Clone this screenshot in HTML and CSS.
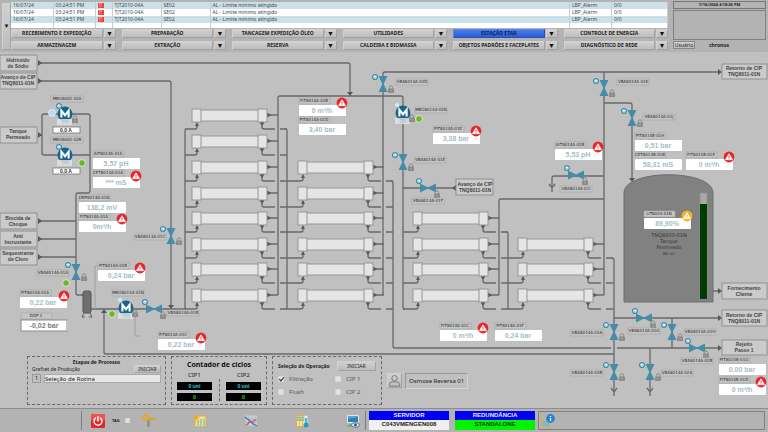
FILE: index.html
```html
<!DOCTYPE html>
<html lang="pt-BR">
<head>
<meta charset="utf-8">
<meta name="viewport" content="width=device-width, initial-scale=1">
<title>Estação ETAR - Osmose Reversa 01</title>
<link rel="stylesheet" href="styles.css">
</head>
<body>
<header class="top">
  <button class="expand" type="button" aria-label="Expandir alarmes">▼</button>
  <div class="center">
    <table class="alarms">
      <colgroup><col class="c-date"><col class="c-date"><col class="c-icon"><col class="c-tag"><col class="c-tag"><col><col class="c-date"><col class="c-last"></colgroup>
      <tbody>
      <tr><td>16/07/24</td><td>03:24:51 PM</td><td><span class="flag">!!</span></td><td>TJT2010-04A</td><td>SE02</td><td>AL - Limite mínimo atingido</td><td>LBP_Alarm</td><td>0/0</td></tr>
      <tr><td>16/07/24</td><td>03:24:51 PM</td><td><span class="flag">!!</span></td><td>TJT2010-04A</td><td>SE02</td><td>AL - Limite mínimo atingido</td><td>LBP_Alarm</td><td>0/0</td></tr>
      <tr><td>16/07/24</td><td>03:24:51 PM</td><td><span class="flag">!!</span></td><td>TJT2010-04A</td><td>SE02</td><td>AL - Limite mínimo atingido</td><td>LBP_Alarm</td><td>0/0</td></tr>
      <tr class="blank"><td></td><td></td><td></td><td></td><td></td><td></td><td></td><td></td></tr>
      </tbody>
    </table>
    <nav class="menu">
      <div class="item"><button type="button">RECEBIMENTO E EXPEDIÇÃO</button><button type="button" class="drop" aria-label="Abrir">▼</button></div>
      <div class="item"><button type="button">PREPARAÇÃO</button><button type="button" class="drop" aria-label="Abrir">▼</button></div>
      <div class="item"><button type="button">TANCAGEM EXPEDIÇÃO ÓLEO</button><button type="button" class="drop" aria-label="Abrir">▼</button></div>
      <div class="item"><button type="button">UTILIDADES</button><button type="button" class="drop" aria-label="Abrir">▼</button></div>
      <div class="item"><button type="button" class="active">ESTAÇÃO ETAR</button><button type="button" class="drop" aria-label="Abrir">▼</button></div>
      <div class="item"><button type="button">CONTROLE DE ENERGIA</button><button type="button" class="drop" aria-label="Abrir">▼</button></div>
      <div class="item"><button type="button">ARMAZENAGEM</button><button type="button" class="drop" aria-label="Abrir">▼</button></div>
      <div class="item"><button type="button">EXTRAÇÃO</button><button type="button" class="drop" aria-label="Abrir">▼</button></div>
      <div class="item"><button type="button">RESERVA</button><button type="button" class="drop" aria-label="Abrir">▼</button></div>
      <div class="item"><button type="button">CALDEIRA E BIOMASSA</button><button type="button" class="drop" aria-label="Abrir">▼</button></div>
      <div class="item"><button type="button">OBJETOS PADRÕES E FACEPLATES</button><button type="button" class="drop" aria-label="Abrir">▼</button></div>
      <div class="item"><button type="button">DIAGNÓSTICO DE REDE</button><button type="button" class="drop" aria-label="Abrir">▼</button></div>
    </nav>
  </div>
  <aside class="session">
    <div class="clock">7/16/2024 4:18:26 PM</div>
    <div class="screenbox"></div>
    <div class="user"><button type="button">Usuário</button><strong>chronus</strong></div>
  </aside>
</header>

<main class="plant">
<svg class="diagram" viewBox="0 52 768 356" role="img" aria-label="Diagrama da osmose reversa">
  <defs>
    <g id="membrane">
      <path class="pipe" d="M-7 14H3q2 0 2-2V8M75 0H86M70 7V12q0 2 2 2H83M88 14H95"/>
      <path class="arrow" d="M5 7l2 4h-4zM75-2h1l3 2-3 2h-1zM68 7h4v1l-2 3-2-3z"/>
      <rect class="shell" x="8" y="-5" width="59" height="11"/>
      <rect class="cap" x="0" y="-6" width="9" height="13"/>
      <rect class="cap" x="66" y="-6" width="9" height="13"/>
    </g>
    <g id="lock">
      <path d="M-1.700 0v-1.500a1.700 1.700 0 0 1 3.400 0V0" fill="none" stroke="#8c8c8c" stroke-width="1"/>
      <rect x="-3" y="-0.500" width="6" height="4.500" rx=".5" fill="#8c8c8c"/>
      <path d="M0 1v1.500" stroke="#b5b5b5" stroke-width=".8"/>
    </g>
    <g id="ring"><circle r="2.400" fill="#e8f2f6" stroke="#3f8cab" stroke-width="1.300"/><path d="M-1 1.500q1-2 2 0" fill="none" stroke="#3f8cab" stroke-width=".7"/></g>
    <g id="vv">
      <path d="M-4.500-8H4.500L.6 0 4.500 8H-4.500L-.6 0z" fill="#458ca9"/>
      <use href="#ring" x="-8" y="-7"/><use href="#lock" x="8" y="5"/>
    </g>
    <g id="hv">
      <path d="M-8-4.500V4.500L0 .6 8 4.500V-4.500L0-.6z" fill="#458ca9"/>
      <use href="#ring" x="-9" y="-7"/><use href="#lock" x="9" y="6"/>
    </g>
    <g id="motorbody">
      <circle r="7.500" fill="#17658b"/>
      <path d="M-3.600 3.600V-3.300L0 1.200 3.600-3.300V3.600" fill="none" stroke="#fff" stroke-width="2.100"/>
      <rect x="-8" y="5" width="15" height="6" fill="#dfe3e5" fill-opacity=".85"/>
    </g>
    <g id="motor"><use href="#ring" x="-6" y="-8"/><use href="#motorbody"/></g>
    <g id="motorpale"><circle cx="-6" cy="-8" r="2.600" fill="#dbe6ea" stroke="#a9c6d3"/><use href="#motorbody"/></g>
    <g id="alarm">
      <circle r="5.400" fill="#e5262b"/>
      <path d="M0-3.300L3.600 2.700H-3.600z" fill="#fff" stroke="#fff" stroke-width=".6" stroke-linejoin="round"/>
      <path d="M0-1.400V.9M0 1.500v.8" stroke="#e5262b" stroke-width=".9"/>
    </g>
    <g id="warn">
      <circle r="5.400" fill="#fbb324"/>
      <path d="M0-3.300L3.600 2.700H-3.600z" fill="#fff" stroke="#fff" stroke-width=".6" stroke-linejoin="round"/>
      <path d="M0-1.400V.9M0 1.500v.8" stroke="#fbb324" stroke-width=".9"/>
    </g>
    <g id="on"><circle r="3.400" fill="#6cb52d" stroke="#e2eedb" stroke-width=".9"/></g>
    <g id="fork"><path class="pipe" d="M-3-5L0-1 3-5M0-1V3"/></g>
    <rect id="tag" class="tagbox" width="32" height="6"/>
    <g id="meter"><rect class="tagbox" width="31" height="6"/><rect class="valbox" y="7" width="47" height="11" rx="1"/></g>
    <rect id="port" class="portbox" width="37" height="16"/>
    <path id="right" class="arrow" d="M-4-3L0 0-4 3z"/>
    <path id="down" class="arrow" d="M-3-4h6L0 0z"/>
  </defs>

  <g class="pipe">
    <path d="M40 63H348q2 0 2 2V93M40 81H169q2 0 2 2V306"/>
    <path d="M40 135H42M58 114H44q-2 0-2 2V153q0 2 2 2H90M70 114H88q2 0 2 2V191q0 2-2 2H78q-2 0-2 2V293q0 2 2 2H83"/>
    <path d="M40 221H76M40 239H76M40 257H76M91 309H186"/>
    <path d="M186 129q-1 0-1 2V309M104 312V352q0 2 2 2H614"/>
    <path d="M278 295V98q0-2 2-2H401q2 0 2 2V307q0 2 2 2M287 309V131q0-2-2-2"/>
    <path d="M287 181H291M287 207H291M287 232H291M287 258H291M287 283H291M287 309H291"/>
    <path d="M383 295V74q0-2 2-2H720M391 181q2 0 2 2V346q0 2 2 2H611M617 348H720"/>
    <path d="M403 188H456M403 232H406M403 258H406M403 283H406M403 309H406"/>
    <path d="M499 295V201q0-2 2-2H604M506 232q2 0 2 2V309M508 258H511M508 283H511M508 309H511"/>
    <path d="M604 72V295M604 176H554q-2 0-2 2V186M604 103H630q2 0 2 2V179"/>
    <path d="M611 258q3 0 3 2V392M614 318H720M672 318V348M650 348V392M713 291H720"/>
  </g>
  <path class="signal" d="M98 266H95V309M135 311V336H140"/>

  <use href="#membrane" x="192" y="115"/><use href="#membrane" x="192" y="141"/><use href="#membrane" x="192" y="167"/><use href="#membrane" x="192" y="193"/>
  <use href="#membrane" x="192" y="218"/><use href="#membrane" x="192" y="244"/><use href="#membrane" x="192" y="269"/><use href="#membrane" x="192" y="295"/>
  <use href="#membrane" x="298" y="167"/><use href="#membrane" x="298" y="193"/><use href="#membrane" x="298" y="218"/><use href="#membrane" x="298" y="244"/><use href="#membrane" x="298" y="269"/><use href="#membrane" x="298" y="295"/>
  <use href="#membrane" x="413" y="218"/><use href="#membrane" x="413" y="244"/><use href="#membrane" x="413" y="269"/><use href="#membrane" x="413" y="295"/>
  <use href="#membrane" x="518" y="244"/><use href="#membrane" x="518" y="269"/><use href="#membrane" x="518" y="295"/>

  <path d="M84 313l-2 4h3M90 313l2 4h-3" fill="none" stroke="#5c5c5c" stroke-width="1"/>
  <rect x="83" y="291" width="8" height="22" rx="2" fill="#6f6f6f" stroke="#555" stroke-width="1"/>

  <path d="M624 302V192C626 169 711 169 713 192V302z" fill="#818181" stroke="#6e6e6e" stroke-width="1"/>
  <rect x="700" y="193" width="7" height="106" fill="#a9a9a9" stroke="#8f8f8f" stroke-width="1"/>
  <rect x="700" y="204" width="7" height="95" fill="#023a03"/>
  <g class="tanktext"><text x="669" y="237">TNQ8003-01N</text><text x="669" y="243">Tanque</text><text x="669" y="249">Permeado</text><text class="small" x="669" y="255">80 m³</text></g>

  <g>
    <use href="#right" x="42" y="63"/><use href="#right" x="42" y="81"/><use href="#right" x="42" y="135"/>
    <use href="#right" x="42" y="221"/><use href="#right" x="42" y="239"/><use href="#right" x="42" y="257"/>
    <use href="#right" x="722" y="72"/><use href="#right" x="722" y="291"/><use href="#right" x="722" y="318"/><use href="#right" x="722" y="348"/>
    <use href="#down" x="350" y="96"/><use href="#down" x="171" y="309"/><use href="#down" x="632" y="182"/>
    <path class="arrow" d="M104 309l3 4h-6zM452 188l4-3v6z"/>
    <use href="#fork" x="552" y="189"/><use href="#fork" x="614" y="393"/><use href="#fork" x="650" y="393"/>
  </g>

  <g class="port">
    <use href="#port" x="0" y="55"/><text x="18" y="62">Hidróxido</text><text x="18" y="68">de Sódio</text>
    <use href="#port" x="0" y="73"/><text x="18" y="79">Avanço de CIP</text><text x="18" y="85">TNQ8011-01N</text>
    <use href="#port" x="0" y="127"/><text x="18" y="133">Tanque</text><text x="18" y="139">Permeado</text>
    <use href="#port" x="0" y="213"/><text x="18" y="220">Biocida de</text><text x="18" y="226">Choque</text>
    <use href="#port" x="0" y="231"/><text x="18" y="238">Anti</text><text x="18" y="244">Incrustante</text>
    <use href="#port" x="0" y="249"/><text x="18" y="255">Sequestrante</text><text x="18" y="261">de Cloro</text>
    <use href="#port" x="456" y="179"/><text x="475" y="186">Avanço de CIP</text><text x="475" y="192">TNQ8011-01N</text>
    <rect class="portbox" x="722" y="64" width="45" height="15"/><text x="744" y="70">Retorno de CIP</text><text x="744" y="76">TNQ8011-01N</text>
    <rect class="portbox" x="722" y="283" width="45" height="16"/><text x="744" y="290">Fornecimento</text><text x="744" y="296">Cliente</text>
    <rect class="portbox" x="722" y="310" width="45" height="16"/><text x="744" y="317">Retorno de CIP</text><text x="744" y="323">TNQ8011-01N</text>
    <rect class="portbox" x="722" y="340" width="45" height="15"/><text x="744" y="346">Rejeito</text><text x="744" y="352">Passo 1</text>
  </g>

  <use href="#vv" x="76" y="272"/><use href="#vv" x="171" y="236"/><use href="#vv" x="383" y="84"/><use href="#vv" x="403" y="162"/>
  <use href="#vv" x="604" y="88"/><use href="#vv" x="632" y="118"/><use href="#vv" x="614" y="332"/><use href="#vv" x="672" y="332"/>
  <use href="#vv" x="614" y="372"/><use href="#vv" x="650" y="372"/>
  <use href="#hv" x="154" y="309"/><use href="#hv" x="428" y="188"/><use href="#hv" x="576" y="175"/><use href="#hv" x="644" y="318"/><use href="#hv" x="697" y="348"/>

  <use href="#motor" x="65" y="114"/><use href="#motor" x="65" y="155"/><use href="#motorpale" x="126" y="308"/><use href="#motorpale" x="403" y="113"/>
  <g class="percent"><text x="65" y="124">0%</text><text x="65" y="165">0%</text><text x="126" y="318">0%</text><text x="403" y="123">0%</text></g>
  <use href="#lock" x="75" y="119"/><use href="#lock" x="135" y="313"/><use href="#lock" x="412" y="118"/>
  <circle cx="52" cy="113" r="3.500" fill="#b5dff2" stroke="#e6f2f8" stroke-width=".8"/>
  <use href="#on" x="82" y="163"/><use href="#on" x="66" y="283"/><use href="#on" x="112" y="314"/><use href="#on" x="419" y="119"/>

  <g class="amp"><rect x="53" y="127" width="27" height="6"/><text x="66" y="132">0,0 A</text><rect x="53" y="168" width="27" height="6"/><text x="66" y="173">0,0 A</text></g>

  <g class="tags">
    <use href="#tag" x="51" y="96"/><text x="67" y="100">MBO8002-02A</text>
    <use href="#tag" x="51" y="137"/><text x="67" y="141">MBO8002-02B</text>
    <use href="#tag" x="37" y="270"/><text x="53" y="274">VBA8014A-01A</text>
    <use href="#tag" x="134" y="234"/><text x="150" y="238">VBA8014A-01C</text>
    <use href="#tag" x="167" y="310"/><text x="183" y="314">VBA8014A-01B</text>
    <use href="#tag" x="112" y="290"/><text x="128" y="294">MBO8014A-01N</text>
    <use href="#tag" x="396" y="79"/><text x="412" y="83">VBA8014A-01D</text>
    <use href="#tag" x="415" y="107"/><text x="431" y="111">MBO8014A-02N</text>
    <use href="#tag" x="414" y="157"/><text x="430" y="161">VBA8014A-01E</text>
    <use href="#tag" x="412" y="198"/><text x="428" y="202">VBA8014A-01F</text>
    <use href="#tag" x="617" y="79"/><text x="633" y="83">VBA8014A-01K</text>
    <use href="#tag" x="643" y="114"/><text x="659" y="118">VBA8014A-01J</text>
    <use href="#tag" x="560" y="186"/><text x="576" y="190">VBA8014A-01I</text>
    <use href="#tag" x="571" y="330"/><text x="587" y="334">VBA8014A-03A</text>
    <use href="#tag" x="571" y="370"/><text x="587" y="374">VBA8014A-03B</text>
    <use href="#tag" x="661" y="370"/><text x="677" y="374">VBA8014A-02A</text>
    <use href="#tag" x="628" y="328"/><text x="644" y="332">VBA8014A-01G</text>
    <use href="#tag" x="684" y="329"/><text x="700" y="333">VBA8014A-01H</text>
    <use href="#tag" x="681" y="358"/><text x="697" y="362">VBA8014A-02B</text>
  </g>

  <g class="meters">
    <g transform="translate(93 151)"><use href="#meter"/><text x="15" y="4">AIT8014A-01A</text><text class="val" x="23" y="15">5,57 pH</text></g>
    <g transform="translate(93 170)"><use href="#meter"/><text x="15" y="4">CET8014A-01A</text><text class="val" x="23" y="15">*** mS</text></g>
    <g transform="translate(79 195)"><use href="#meter"/><text x="15" y="4">ORP8014A-01N</text><text class="val" x="23" y="15">138,2 mV</text></g>
    <g transform="translate(79 214)"><use href="#meter"/><text x="15" y="4">FIT8014A-01A</text><text class="val" x="23" y="15">0m³/h</text></g>
    <g transform="translate(98 263)"><use href="#meter"/><text x="15" y="4">PIT8014A-01B</text><text class="val" x="23" y="15">0,24 bar</text></g>
    <g transform="translate(20 290)"><use href="#meter"/><text x="15" y="4">PIT8014A-01A</text><text class="val" x="23" y="15">0,22 bar</text></g>
    <g transform="translate(21 313)" class="ddp"><use href="#meter"/><rect y="7" width="46" height="11"/><text x="15" y="4">DDP 1</text><text class="val" x="23" y="15">-0,02 bar</text></g>
    <g transform="translate(158 332)"><use href="#meter"/><text x="15" y="4">PIT8014A-01C</text><text class="val" x="23" y="15">0,22 bar</text></g>
    <g transform="translate(299 98)"><use href="#meter"/><text x="15" y="4">FIT8014A-01B</text><text class="val" x="23" y="15">0 m³/h</text></g>
    <g transform="translate(299 117)"><use href="#meter"/><text x="15" y="4">PIT8014A-01D</text><text class="val" x="23" y="15">3,40 bar</text></g>
    <g transform="translate(433 126)"><use href="#meter"/><text x="15" y="4">PIT8014A-01E</text><text class="val" x="23" y="15">3,38 bar</text></g>
    <g transform="translate(440 323)"><use href="#meter"/><text x="15" y="4">FIT8014A-01C</text><text class="val" x="23" y="15">0 m³/h</text></g>
    <g transform="translate(495 323)"><use href="#meter"/><text x="15" y="4">PIT8014A-01F</text><text class="val" x="23" y="15">0,24 bar</text></g>
    <g transform="translate(555 142)"><use href="#meter"/><text x="15" y="4">AIT8014A-01B</text><text class="val" x="23" y="15">5,53 pH</text></g>
    <g transform="translate(635 133)"><use href="#meter"/><text x="15" y="4">PIT8014B-01H</text><text class="val" x="23" y="15">0,51 bar</text></g>
    <g transform="translate(635 152)"><use href="#meter"/><text x="15" y="4">CET8014B-01B</text><text class="val" x="23" y="15">58,31 mS</text></g>
    <g transform="translate(686 152)"><use href="#meter"/><text x="15" y="4">FIT8014B-01E</text><text class="val" x="23" y="15">0 m³/h</text></g>
    <g transform="translate(644 211)"><use href="#meter"/><text x="15" y="4">LIT8003-01N</text><text class="val" x="23" y="15">89,90%</text></g>
    <g transform="translate(719 357)"><use href="#meter"/><text x="15" y="4">PIT8014B-01G</text><text class="val" x="23" y="15">0,00 bar</text></g>
    <g transform="translate(719 377)"><use href="#meter"/><text x="15" y="4">FIT8014B-01D</text><text class="val" x="23" y="15">0 m³/h</text></g>
  </g>

  <use href="#alarm" x="136" y="176"/><use href="#alarm" x="122" y="219"/><use href="#alarm" x="140" y="268"/><use href="#alarm" x="64" y="296"/>
  <use href="#alarm" x="201" y="338"/><use href="#alarm" x="342" y="103"/><use href="#alarm" x="476" y="131"/><use href="#alarm" x="483" y="328"/>
  <use href="#alarm" x="598" y="147"/><use href="#alarm" x="729" y="157"/><use href="#alarm" x="761" y="382"/><use href="#warn" x="687" y="216"/>
</svg>

<div class="panels">
  <section class="panel steps">
    <h2>Etapas de Processo</h2>
    <div class="row"><label for="rotina">Grafcet de Produção</label><button type="button">INICIAR</button></div>
    <div class="row fields"><span class="num">1</span><input id="rotina" type="text" value="Seleção de Rotina"></div>
  </section>
  <section class="panel cycles">
    <h2>Contador de ciclos</h2>
    <div class="counters">
      <div class="counter"><h3>CIP1</h3><output class="cyan">0 uni</output><output class="green">0</output></div>
      <div class="split"></div>
      <div class="counter"><h3>CIP2</h3><output class="cyan">0 uni</output><output class="green">0</output></div>
    </div>
  </section>
  <section class="panel operation">
    <div class="row"><h2>Seleção de Operação</h2><button type="button">INICIAR</button></div>
    <div class="checks">
      <label><input type="checkbox" checked>Filtração</label><label><input type="checkbox">CIP 1</label>
      <label><input type="checkbox">Flush</label><label><input type="checkbox">CIP 2</label>
    </div>
  </section>
  <div class="unit">
    <button type="button" aria-label="Operador"><svg viewBox="0 0 14 14"><circle cx="7" cy="4.500" r="2.900"/><path d="M1.500 13V11.500q0-3 3-3h5q3 0 3 3V13z"/></svg></button>
    <span>Osmose Reversa 01</span>
  </div>
</div>
</main>

<footer class="bottom">
  <div class="tools">
    <button type="button" aria-label="Desligar"><svg viewBox="0 0 14 14"><rect width="14" height="14" rx="1.500" fill="#dd2a2a"/><path d="M0 1.500Q0 0 1.500 0h11Q14 0 14 1.500V6Q7 8 0 6z" fill="#e95450"/><path d="M4.600 4A4 4 0 1 0 9.400 4M7 2.500V7" fill="none" stroke="#fff" stroke-width="1.300" stroke-linecap="round"/></svg></button>
    <label class="taglabel">TAG<input type="checkbox"></label>
    <button type="button" aria-label="Chaves"><svg viewBox="0 0 14 14"><path d="M5.500 5L5 13h2l1-2-.6-.8.800-1-.7-1L8 5z" fill="#8b8d8f"/><path d="M5 3.500l9 1v2l-1.500-.5-.7 1-1-1.200L5 6z" fill="#d6a520"/><circle cx="3.800" cy="3.500" r="2.500" fill="none" stroke="#e1ad1d" stroke-width="1.900"/></svg></button>
    <button type="button" aria-label="Relatório"><svg viewBox="0 0 14 14"><rect x="2" y="2" width="11" height="11" rx="1" fill="#f5e9a0" stroke="#dfa63b"/><path d="M5 6v7M8 5v8M11 5v8" stroke="#7fc3cb" stroke-width="1.500"/><path d="M3 5h10M3 8h9M3 11h9" stroke="#e6c25a" stroke-width=".6"/><path d="M3.500 0l1 2.400 2.500 1-2.500 1-1 2.600-1-2.600L0 3.400l2.500-1z" fill="#ffa60a"/></svg></button>
    <button type="button" aria-label="Gráfico"><svg viewBox="0 0 14 14"><rect x="1" y="1.500" width="12" height="11" fill="#c7d2d8"/><path d="M1.500 1v11.500H13M4.500 2v10M8 2v10M11 2v10M2 5h11M2 8.500h11" fill="none" stroke="#a3aeb5" stroke-width=".6"/><path d="M1 3l5 4 2.500 2.500L13 12" fill="none" stroke="#3979b5" stroke-width="1.200"/><path d="M2 11.500L6.500 7l2 1.500L10.500 6l2 .5" fill="none" stroke="#d34a5d" stroke-width="1.200"/></svg></button>
    <button type="button" aria-label="Temperatura"><svg viewBox="0 0 14 14"><rect x="1" y="1" width="10" height="12" fill="#e7ae42"/><rect x="2" y="2" width="8" height="10" fill="#f3e5a1"/><path d="M2 3.500h8M2 6h8" stroke="#6fb6b2" stroke-width="1.400"/><path d="M4.500 2v10M7.500 2v10" stroke="#d9a546" stroke-width=".6"/><path d="M11 3v7" stroke="#e8f6fb" stroke-width="3" stroke-linecap="round"/><path d="M11 4v6" stroke="#299bc3" stroke-width="1.500"/><circle cx="11" cy="11" r="2.500" fill="#249bc6"/></svg></button>
    <button type="button" aria-label="Supervisão"><svg viewBox="0 0 14 14"><rect x="1" y="1" width="12" height="8" rx=".6" fill="#dbe8ef"/><rect x="2" y="2" width="10" height="6" fill="#2b82b7"/><path d="M2 5l10-2v-1H2z" fill="#5aa4ce"/><path d="M1 12h5M3 11h3" stroke="#55b649" stroke-width="1.200"/><ellipse cx="9.500" cy="11" rx="4" ry="2.300" fill="#eaf0f4" stroke="#4b6d98"/><circle cx="9.500" cy="11" r="1.400" fill="#254f87"/></svg></button>
  </div>
  <dl class="state"><dt>SERVIDOR</dt><dd>C043VMENGEN008</dd></dl>
  <dl class="state ok"><dt>REDUNDÂNCIA</dt><dd>STANDALONE</dd></dl>
  <div class="info"><svg viewBox="0 0 14 14"><rect x="1" y="6.500" width="8" height="6.500" fill="#79b8d8" stroke="#e2b33b" stroke-width="1.200"/><path d="M.4 6.500V5h3.500l1 1.500z" fill="#e2b33b"/><circle cx="9.500" cy="4.500" r="4.400" fill="#2186d8"/><path d="M9.500 3.900V7M9.500 2v1" stroke="#fff" stroke-width="1.300"/></svg></div>
</footer>
</body>
</html>
```
FILE: styles.css
```css
* { box-sizing: border-box; }
body {
  margin: 0;
  min-height: 100vh;
  display: flex;
  flex-direction: column;
  background: #c0c0c0;
  color: #222;
  font: 5px/7px "Noto Sans", "Open Sans", sans-serif;
}
button, input, output { font: inherit; color: inherit; }
button {
  display: flex;
  align-items: center;
  justify-content: center;
  margin: 0;
  padding: 0;
  border: 1px solid #b0b0b0;
  border-color: #d2d2d2 #a2a2a2 #a2a2a2 #d2d2d2;
  background: linear-gradient(#d0d0d0, #bdbdbd);
  white-space: nowrap;
}
h2, h3, dl, dd { margin: 0; font-size: inherit; }

/* header */
.top {
  display: grid;
  grid-template-columns: 9px minmax(0, 1fr) 93px;
  padding: 1px 2px 2px;
  background: #b3b3b3;
}
.expand { margin: 2px 0 0; height: 47px; font-size: 6px; color: #111; }
.center { margin-right: 5px; padding-top: 1px; }
.alarms {
  width: 100%;
  table-layout: fixed;
  border-collapse: collapse;
  background: #fff;
  color: #3f474b;
}
.alarms td { height: 7px; padding: 0 2px; line-height: 7px; border-right: 1px solid #c8cdd0; white-space: nowrap; }
.alarms tr:nth-child(odd) { background: #cbe1ea; }
.alarms .blank td { height: 5px; }
.c-date { width: 42px; }
.c-icon { width: 17px; }
.c-tag { width: 49px; }
.c-last { width: 56px; }
.flag { display: block; width: 6px; height: 5px; background: #f2403b; color: #ffb9b5; line-height: 5px; text-align: center; font-weight: 700; }
.menu { display: grid; grid-template-columns: repeat(6, 1fr); gap: 3px 6px; margin-top: 1px; }
.item { display: grid; grid-template-columns: 1fr 12px; gap: 1px; }
.item button { height: 9px; font-weight: 700; line-height: 7px; }
.item .drop { font-size: 7px; color: #111; }
.item .active { background: linear-gradient(#4a7df0, #2a5cd0); border-color: #5a86e8 #2a50b0 #2a50b0 #5a86e8; color: #0b1d5c; }
.session { display: flex; flex-direction: column; gap: 1px; }
.clock { height: 8px; border: 1px solid #777; text-align: center; font-weight: 700; line-height: 6px; font-size: 4px; }
.screenbox { flex: 1; border: 1px solid #808080; }
.user { display: grid; grid-template-columns: 22px 1fr; align-items: center; margin-bottom: 1px; }
.user button { height: 8px; border-color: #888; }
.user strong { padding-left: 14px; }

/* process diagram */
.plant { position: relative; flex: 1; }
.diagram { display: block; width: 100%; height: auto; font-family: "Liberation Sans", Arial, sans-serif; text-anchor: middle; }
.pipe { fill: none; stroke: #686868; stroke-width: 1.3; }
.arrow { fill: #585858; }
.signal { fill: none; stroke: #a0a0a0; stroke-width: 1; }
.shell, .cap { fill: #e5e5e5; stroke: #969696; stroke-width: 1; }
.portbox { fill: #cbcbcb; stroke: #909090; stroke-width: 1; }
.port text { font-size: 5px; font-weight: 700; fill: #444; }
.tagbox { fill: #c6c6c6; stroke: #a2a2a2; stroke-width: .6; }
.tags text, .meters text { font: 4px "DejaVu Sans", sans-serif; fill: #1c1c1c; }
.valbox { fill: #fff; }
.meters .val { font: 700 7px "Liberation Sans", Arial, sans-serif; fill: #a5bdc9; }
.ddp > rect { fill: #fff; stroke: #8a8a8a; stroke-width: 1; }
.meters .ddp .val { fill: #7c7c7c; }
.amp rect { fill: #fff; stroke: #777; stroke-width: .8; }
.amp text { font-size: 5px; font-weight: 700; fill: #333; }
.percent text { font-size: 5px; fill: #a5bcc7; }
.tanktext text { font: 5px "DejaVu Sans", sans-serif; fill: #333; }
.tanktext .small { font-size: 4px; }

/* panels laid over the foot of the diagram */
.panels { position: absolute; left: 27px; bottom: 3px; display: flex; gap: 5px; }
.panel { height: 49px; border: 1px dashed #6a6a6a; }
.row { display: flex; justify-content: space-between; align-items: center; }
.steps { width: 139px; padding: 2px 4px; }
.steps h2 { text-align: center; line-height: 6px; }
.steps .row { align-items: flex-end; }
.steps button { width: 27px; height: 8px; }
.steps .fields { gap: 3px; margin-top: 1px; font-size: 6px; }
.num { width: 9px; height: 9px; border: 1px solid #999; text-align: center; line-height: 7px; }
.fields input { flex: 1; min-width: 0; height: 9px; padding: 0; border: 1px solid #aaa; background: #e6e6e6; }
.cycles { width: 96px; padding: 4px 5px; text-align: center; }
.cycles h2 { font-size: 7px; line-height: 8px; color: #111; }
.counters { display: flex; justify-content: space-between; }
.counter { display: flex; flex-direction: column; gap: 3px; width: 35px; }
.counter h3 { font-weight: 400; font-size: 6px; line-height: 8px; margin-top: 2px; }
.counter output { display: block; height: 8px; background: #000; font-weight: 700; line-height: 8px; }
.cyan { color: #19c5d2; }
.green { color: #12d512; }
.split { border-left: 1px dashed #6a6a6a; margin: 10px 0 0; }
.operation { width: 110px; padding: 4px 5px; }
.operation button { width: 39px; height: 10px; }
.checks { display: grid; grid-template-columns: 57px 1fr; row-gap: 5px; margin-top: 4px; font-size: 6px; line-height: 8px; color: #5a5a5a; }
.checks label { display: flex; align-items: center; gap: 5px; }
input[type="checkbox"] { appearance: none; width: 6px; height: 6px; margin: 0; border: 1px solid #d5d5d5; background: #e3e3e3; }
input[type="checkbox"]:checked { position: relative; }
input[type="checkbox"]:checked::after { content: ""; position: absolute; left: 1px; top: -1px; width: 2px; height: 4px; border: solid #224; border-width: 0 1px 1px 0; transform: rotate(40deg); }
.unit { display: flex; align-items: center; gap: 3px; }
.unit button { width: 15px; height: 15px; }
.unit svg { flex: none; width: 13px; height: 13px; fill: none; stroke: #777; stroke-width: 1; }
.unit span { height: 16px; padding: 0 3px; border: 1px solid #aaa; border-color: #999 #d5d5d5 #d5d5d5 #999; font-size: 6px; line-height: 14px; }

/* footer */
.bottom {
  display: grid;
  grid-template-columns: 366px 80px 80px minmax(0, 1fr);
  column-gap: 3px;
  height: 24px;
  padding: 2px 3px 2px 0;
  border-top: 1px solid #8c8c8c;
  background: #b3b3b3;
}
.tools { display: flex; align-items: center; gap: 37px; margin-left: 81px; padding-left: 9px; border: solid #7d7d7d; border-width: 0 1px; }
.tools button { flex: none; width: 14px; height: 14px; border: 0; background: none; }
.tools svg { flex: none; width: 14px; height: 14px; }
.taglabel { display: flex; align-items: center; gap: 5px; width: 20px; margin: 0 -27px 0 -30px; font-weight: 700; font-size: 4px; }
.taglabel input { width: 5px; height: 5px; flex: none; }
.state { text-align: center; font: 700 6px/9px "Liberation Sans", Arial, sans-serif; }
.state dt { height: 9px; background: #0000f4; color: #e8e8ff; }
.state dd { height: 10px; background: #f0f0f0; color: #222; }
.ok { margin: 0 -3px 0 3px; }
.ok dd { background: #00f400; color: #063a06; }
.info { display: flex; align-items: center; margin-left: 3px; padding-left: 2px; border: 1px solid #808080; }
.info svg { flex: none; width: 14px; height: 14px; }
```
